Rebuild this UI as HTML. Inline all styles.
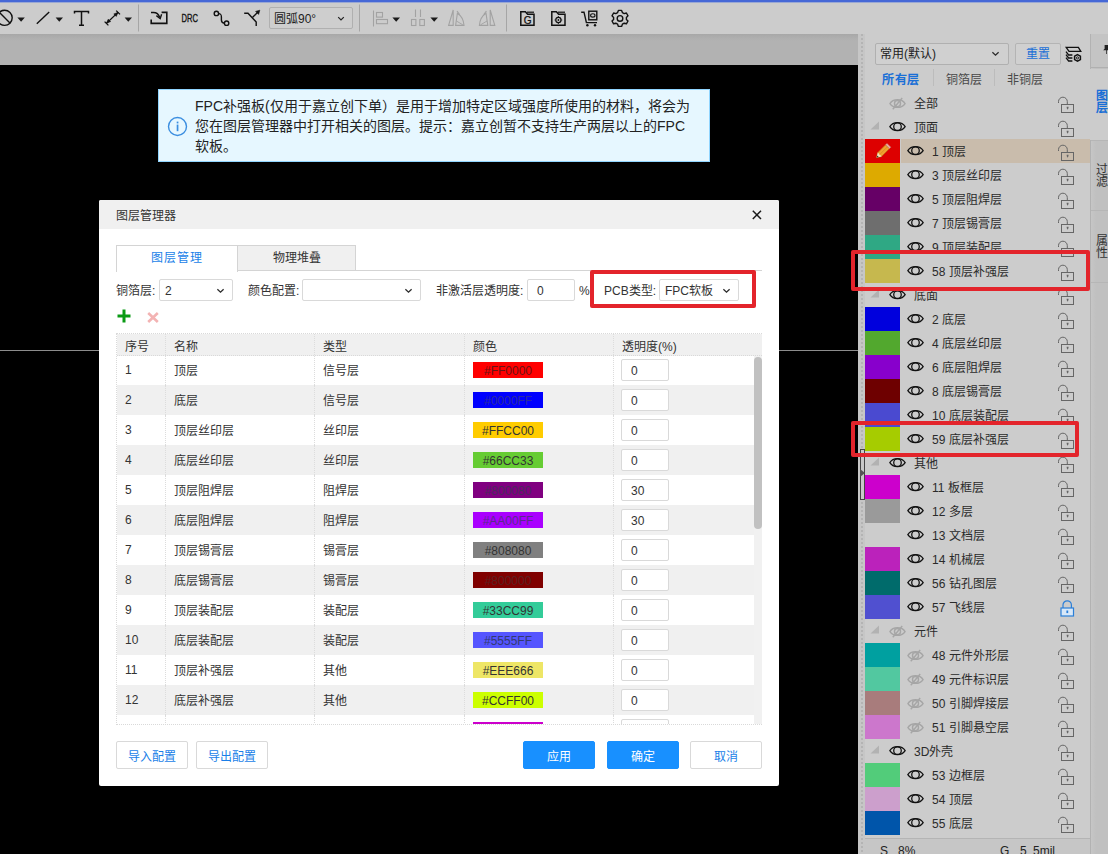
<!DOCTYPE html>
<html lang="zh-CN">
<head>
<meta charset="utf-8">
<title>图层管理器</title>
<style>
*{box-sizing:border-box;margin:0;padding:0}
html,body{width:1108px;height:854px;overflow:hidden;background:#000}
body{position:relative;font-family:"Liberation Sans",sans-serif;font-size:12px;color:#333}
.abs{position:absolute}
/* top chrome */
#bluebar{left:0;top:0;width:1108px;height:3px;background:linear-gradient(#4668d6 0 2px,#9aa8d4 2px 3px);z-index:3}
#toolbar{left:0;top:0;width:1108px;height:34px;background:#cccccc}
#band{left:0;top:34px;width:858px;height:31px;background:linear-gradient(#a8a8a8,#b0b0b0 16%,#b2b2b2 22%,#b2b2b2)}
#canvas{left:0;top:65px;width:858px;height:789px;background:#000}
.hline{height:1px;background:#8c8c8c}
.tsep{top:5px;width:1px;height:27px;background:#aaa}
.ti{position:absolute}
.dd{position:absolute;width:0;height:0;border-left:3.5px solid transparent;border-right:3.5px solid transparent;border-top:4px solid #222}
.dd.dis{border-top-color:#222}
#arcsel{left:269px;top:7px;width:84px;height:22px;border:1px solid #b0b0b0;border-radius:2px;background:#cecece;font-size:12px;line-height:23px;padding-left:4px;color:#222}
.chev{position:absolute}
/* splitter + right panel */
#split{left:858px;top:34px;width:7px;height:820px;background:#c6c6c6}
#split:after{content:"";position:absolute;left:3px;top:0;width:2px;height:820px;background-image:repeating-linear-gradient(#b4b4b4 0 2px,rgba(0,0,0,0) 2px 4px)}
#panel{left:865px;top:34px;width:225px;height:820px;background:#cccccc;overflow:hidden}
#vtabs{left:1090px;top:34px;width:18px;height:820px;background:linear-gradient(90deg,#c6c6c6,#c0c0c0 5px);border-left:1px solid #b2b2b2}
#preset{left:10px;top:9px;width:134px;height:22px;border:1px solid #b0b0b0;border-radius:2px;background:#d0d0d0;font-size:12px;line-height:20px;padding-left:4px;color:#222}
#reset{left:150px;top:9px;width:46px;height:22px;border:1px solid #b4b4b4;border-radius:2px;background:#d0d0d0;color:#1a6fd6;font-size:12px;line-height:20px;text-align:center}
.ptab{top:38px;font-size:12px;line-height:16px;color:#484848}
.psep{top:35px;width:1px;height:17px;background:#bcbcbc}
.lr{position:absolute;left:0;width:225px;height:24px}
.lr .sw{position:absolute;left:0;top:0;width:35px;height:24px}
.lr .selbg{position:absolute;left:36px;top:0;width:189px;height:24px;background:#c9bcac}
.lr .eye{position:absolute;top:6px;left:42px}
.lr.grp .eye,.lr.all .eye{left:24px}
.lr .tri{position:absolute;left:5px;top:6px}
.lr .lt{position:absolute;left:67px;top:1px;line-height:24px;font-size:12px;color:#2a2a2a;white-space:nowrap}
.lr.grp .lt,.lr.all .lt{left:49px}
.lr .lock{position:absolute;left:192px;top:5px}
.lr .pencil{position:absolute;left:9px;top:3px}
#status{left:0;top:804px;width:225px;height:16px;background:#c6c6c6;border-top:1px solid #b4b4b4;font-size:12px;line-height:24px;color:#222}
.redbox{border:4px solid #e3242b;border-radius:2px}
/* info tip */
#tip{left:158px;top:89px;width:552px;height:73px;background:#e6f7ff;border:1px solid #91d5ff;color:#222;font-size:14px;line-height:20px;padding:6px 0 0 36px;white-space:nowrap;overflow:hidden}
/* dialog */
#dlg{left:99px;top:200px;width:680px;height:586px;background:#fff;border-radius:2px}
#dlgtitle{left:0;top:0;width:680px;height:29px;background:#f0f0f0;border-radius:2px 2px 0 0;line-height:32px;padding-left:17px;font-size:12px;color:#333}
.tab{top:45px;height:26px;line-height:24px;text-align:center;font-size:12px;border:1px solid #d4d4d4}
#tabline{left:17px;top:70px;width:646px;height:1px;background:#d4d4d4}
.lbl{line-height:25px;font-size:12px;color:#333;white-space:nowrap}
.sel2{height:22px;border:1px solid #d9d9d9;border-radius:2px;background:#fff;line-height:22px;font-size:12px;padding-left:5px;color:#333}
#tbl{left:17px;top:133px;width:646px;height:392px;overflow:hidden;border:1px dotted #d9d9d9;border-right:none}
#thead{position:absolute;left:0;top:0;width:645px;height:22px;z-index:2;background:#f0f0f0;border-bottom:1px dotted #d9d9d9}
#tbody{position:absolute;left:0;top:21px;width:637px}
.tr{position:relative;height:30px;background:#fff}
.tr.alt{background:#f0f0f0}
.c{position:absolute;top:0;height:30px;line-height:31px;font-size:12px;color:#333;white-space:nowrap;border-left:1px dotted #dcdcdc;padding-left:8px}
#thead .c{height:21px;line-height:27px}
.c1{left:0;width:48px;border-left:none}
.c2{left:48px;width:149px}
.c3{left:197px;width:150px}
.tr .c2,.tr .c3{line-height:33px}
.c4{left:347px;width:149px}
.c5{left:496px;width:141px}
.chip{position:absolute;left:8px;top:7px;width:70px;height:16px;line-height:18px;text-align:center;font-size:12px}
.inp{position:absolute;left:7px;top:4px;width:48px;height:22px;border:1px solid #d9d9d9;border-radius:2px;background:#fff;line-height:22px;padding-left:9px;color:#333}
#sbar{position:absolute;left:637px;top:21px;width:8px;height:370px;background:#f1f1f1}
#sthumb{position:absolute;left:0;top:2px;width:8px;height:172px;border-radius:4px;background:#c1c1c1}
.btn{top:541px;width:72px;height:28px;line-height:30px;text-align:center;font-size:12px;border-radius:2px;border:1px solid #d9d9d9;background:#fff;color:#1a7fe8}
.btn.pri{background:#1890ff;border-color:#1890ff;color:#fff}
</style>
</head>
<body>
<div id="bluebar" class="abs"></div>
<div id="toolbar" class="abs">
<!--TB_START-->
<svg class="abs" style="left:0;top:0" width="1108" height="34" viewBox="0 0 1108 34">
<g fill="none" stroke="#111" stroke-width="1.4" stroke-linecap="butt">
  <!-- circle slash -->
  <circle cx="4.6" cy="17.8" r="7.6"/><path d="M-1 12 L10.2 23.2"/>
  <!-- line -->
  <path d="M36.8 23.8 L49.2 12"/>
  <!-- T -->
  <path d="M74.5 13.5 V11.5 H88.5 V13.5 M81.5 11.5 V25 M79 25.2 H84" stroke-width="1.5"/>
  <!-- dimension -->
  <path d="M106.5 23.2 L118 12.4" stroke-width="1.3"/>
  <path d="M104.6 21.6 L108.4 25.4 M116.2 10.6 L120 14.4" stroke-width="1.3"/>
  <path d="M106.5 23.2 L110.6 21.6 L108.2 19.2 Z M118 12.4 L113.8 14 L116.3 16.4 Z" fill="#111" stroke-width="0.6"/>
  <!-- route bracket -->
  <path d="M151.2 19.6 V23.4 H166.8 V12.4 H161.6" stroke-width="1.6"/>
  <path d="M151 12.6 H153.5 C157 12.6 158.6 14.2 159.6 17.2" stroke-width="1.5"/>
  <path d="M156.4 15.6 L160.2 18.6 L161.6 14.2" stroke-width="1.4"/>
  <!-- nodes -->
  <circle cx="216.4" cy="13.4" r="2.2"/><circle cx="226.6" cy="23.2" r="2.2"/>
  <path d="M218.6 13.6 C221.4 13.8 221.4 15 221.4 17 V20 C221.4 22.4 222 23 224.4 23.2"/>
  <!-- branch -->
  <path d="M244.2 13.2 H248 L256.2 22 V26"/>
  <path d="M252.4 17.6 L258.2 11.8"/>
  <path d="M259.8 10.2 L255.6 11.4 L258.6 14.4 Z" fill="#111" stroke-width="0.6"/>
</g>
<!-- DRC -->
<text x="181.6" y="22.2" font-family="Liberation Sans, sans-serif" font-size="11.5" fill="#111" stroke="#111" stroke-width="0.35" textLength="16.4" lengthAdjust="spacingAndGlyphs">DRC</text>
<!-- dropdown arrows -->
<g fill="#1a1a1a">
  <path d="M17.4 17.6 H24.8 L21.1 21.8 Z"/>
  <path d="M55.6 17.6 H63 L59.3 21.8 Z"/>
  <path d="M124.6 17.6 H132 L128.3 21.8 Z"/>
  <path d="M392.4 17.6 H400 L396.2 21.8 Z"/>
  <path d="M430.4 17.6 H438 L434.2 21.8 Z"/>
</g>
<!-- separators -->
<g stroke="#a6a6a6" stroke-width="1">
  <path d="M138.5 4.5 V31.5 M359.5 4.5 V31.5 M506.5 4.5 V31.5"/>
</g>
<!-- disabled icons -->
<g fill="none" stroke="#a2a2a2" stroke-width="1.1">
  <path d="M373.5 10.5 V26.5"/><rect x="376.5" y="12.5" width="6" height="4.6"/><rect x="376.5" y="19.5" width="11" height="4.2"/>
  <path d="M415.5 9.5 V17 M420.5 9.5 V17"/><rect x="411.5" y="19.5" width="4.4" height="6"/><rect x="419.8" y="19.5" width="4.6" height="6"/>
  <!-- mirror 1 -->
  <path d="M453.2 10 L448.6 25.4 H453.2 Z"/><path d="M455.6 25.4 H464 C463.6 20 461 15.5 457.4 13.2 L455.6 25.4 Z"/><path d="M457 11 L459.6 14.6"/><path d="M456.4 21 L462.8 24.8" stroke-width="0.9"/>
  <!-- mirror 2 -->
  <path d="M490.2 10 L494.8 25.4 H490.2 Z"/><path d="M487.8 25.4 H479.4 C479.8 20 482.4 15.5 486 13.2 L487.8 25.4 Z"/><path d="M486.4 11 L483.8 14.6"/><path d="M487 21 L480.6 24.8" stroke-width="0.9"/>
</g>
<!-- folder G -->
<g fill="none" stroke="#111" stroke-width="1.5">
  <path d="M520.8 25.2 V11.8 H525.4 L527.6 14.2 H534 V25.2 Z"/>
  <path d="M527 12.2 H534" stroke-width="1.2"/>
  <path d="M551.8 25.2 V11.8 H556.4 L558.6 14.2 H565 V25.2 Z"/>
  <path d="M558 12.2 H565" stroke-width="1.2"/>
  <circle cx="558.4" cy="20" r="2.6" stroke-width="1.2"/>
  <path d="M558.4 16.2 V17.2 M558.4 22.8 V23.8 M554.6 20 H555.6 M561.2 20 H562.2" stroke-width="1.2"/>
</g>
<circle cx="558.4" cy="20" r="0.9" fill="#111"/>
<text x="523.8" y="23.8" font-family="Liberation Sans, sans-serif" font-size="10" fill="#111" stroke="#111" stroke-width="0.25">G</text>
<!-- cart -->
<g fill="none" stroke="#111" stroke-width="1.4">
  <path d="M581.2 12.2 H584 L586.4 22.6 H597"/>
  <rect x="588.8" y="11.2" width="8" height="8.6"/>
  <ellipse cx="592.8" cy="15.4" rx="2.2" ry="1.7" stroke-width="1.1"/>
</g>
<circle cx="587.4" cy="25.2" r="1.2" fill="#111"/><circle cx="595" cy="25.2" r="1.2" fill="#111"/>
<!-- gear -->
<g fill="none" stroke="#111" stroke-width="1.4" stroke-linejoin="round">
  <path d="M618.4 10.4 H621.6 L622.4 12.6 L624.2 13.6 L626.4 13 L628 15.8 L626.4 17.4 V19.4 L628 21 L626.4 23.8 L624.2 23.2 L622.4 24.2 L621.6 26.4 H618.4 L617.6 24.2 L615.8 23.2 L613.6 23.8 L612 21 L613.6 19.4 V17.4 L612 15.8 L613.6 13 L615.8 13.6 L617.6 12.6 Z"/>
  <circle cx="620" cy="18.4" r="2.8"/>
</g>
</svg>
<div id="arcsel" class="abs">圆弧90°<svg class="chev" style="left:67px;top:8px" width="8" height="6" viewBox="0 0 8 6"><path d="M1.2 1.2 L4 4 L6.8 1.2" fill="none" stroke="#222" stroke-width="1.2"/></svg></div>
<!--TB_END-->
</div>
<div id="band" class="abs"></div>
<div id="canvas" class="abs"></div>
<div class="abs hline" style="left:0;top:350px;width:99px"></div>
<div class="abs hline" style="left:779px;top:350px;width:79px"></div>

<div id="tip" class="abs">
<svg class="abs" style="left:8px;top:26px" width="21" height="21" viewBox="0 0 21 21"><circle cx="10.5" cy="10.5" r="9" fill="none" stroke="#3b8ee0" stroke-width="1.4"/><rect x="9.7" y="8.6" width="1.7" height="6.6" fill="#3b8ee0"/><rect x="9.7" y="5.6" width="1.7" height="1.8" fill="#3b8ee0"/></svg>
FPC补强板(仅用于嘉立创下单）是用于增加特定区域强度所使用的材料，将会为<br>您在图层管理器中打开相关的图层。提示：嘉立创暂不支持生产两层以上的FPC<br>软板。
</div>

<div id="split" class="abs"></div>
<div id="panel" class="abs">
  <div id="preset" class="abs">常用(默认)<svg class="chev" style="left:115px;top:7px" width="9" height="6" viewBox="0 0 9 6"><path d="M1.4 1.2 L4.5 4.2 L7.6 1.2" fill="none" stroke="#2a2a2a" stroke-width="1.25"/></svg></div>
  <div id="reset" class="abs">重置</div>
  <svg class="abs" style="left:199px;top:10px" width="22" height="20" viewBox="0 0 22 20"><g fill="none" stroke="#111" stroke-width="1.3"><path d="M2.2 3.4 H14.4 L16.8 7.4 H5 Z"/><path d="M2 7.6 L4.6 11 H8.4 M2 10.6 L4.6 14 H8.4 M2 13.6 L4.6 17 H8.4"/><path d="M13.5 10.6 L16.4 12.2 V15.6 L13.5 17.2 L10.6 15.6 V12.2 Z" stroke-width="1.5"/></g><circle cx="13.5" cy="13.9" r="1.1" fill="none" stroke="#111" stroke-width="0.9"/></svg>
  <div class="abs ptab" style="left:17px;color:#1a6fd6;font-weight:bold;letter-spacing:0.6px">所有层</div>
  <div class="abs psep" style="left:68px"></div>
  <div class="abs ptab" style="left:81px">铜箔层</div>
  <div class="abs psep" style="left:129px"></div>
  <div class="abs ptab" style="left:142px">非铜层</div>
  <div class="abs" style="left:0;top:-34px;width:225px;height:854px">
<div class="lr all" style="top:91px"><svg class="eye" width="17" height="13.2" viewBox="0 0 18 14"><path d="M1 7 C4.2 1.6 13.8 1.6 17 7 C13.8 12.4 4.2 12.4 1 7 Z" fill="none" stroke="#a6a6a6" stroke-width="1.5"/><circle cx="9" cy="7" r="3.2" fill="none" stroke="#a6a6a6" stroke-width="1.5"/><path d="M4 13 L14 1" stroke="#a6a6a6" stroke-width="1.5"/></svg><span class="lt">全部</span><svg class="lock" width="18" height="17" viewBox="0 0 18 17"><path d="M1.5 7 V5.6 A4.4 4.4 0 0 1 10.3 5.6 V8.5" fill="none" stroke="#666" stroke-width="1"/><rect x="4.5" y="8.5" width="12" height="8" fill="none" stroke="#666" stroke-width="1"/><path d="M9.7 10.8 h1.8 v1.2 l-0.9 1.8 l-0.9 -1.8 Z" fill="#666"/></svg></div>
<div class="lr grp" style="top:115px"><svg class="tri" width="10" height="9" viewBox="0 0 10 9"><path d="M9 0.5 V8.5 H0.5 Z" fill="#b2b2b2"/></svg><svg class="eye" width="17" height="11.4" viewBox="0 0 18 12"><path d="M0.9 6 C4.2 0.4 13.8 0.4 17.1 6 C13.8 11.6 4.2 11.6 0.9 6 Z" fill="none" stroke="#111" stroke-width="1.35"/><circle cx="9" cy="6" r="4" fill="none" stroke="#111" stroke-width="1.35"/></svg><span class="lt">顶面</span><svg class="lock" width="18" height="17" viewBox="0 0 18 17"><path d="M1.5 7 V5.6 A4.4 4.4 0 0 1 10.3 5.6 V8.5" fill="none" stroke="#666" stroke-width="1"/><rect x="4.5" y="8.5" width="12" height="8" fill="none" stroke="#666" stroke-width="1"/><path d="M9.7 10.8 h1.8 v1.2 l-0.9 1.8 l-0.9 -1.8 Z" fill="#666"/></svg></div>
<div class="lr lay sel" style="top:139px"><span class="sw" style="background:#dd0000"><svg class="pencil" width="18" height="18" viewBox="0 0 18 18"><path d="M2.6 15.6 L3.8 10.6 L11.6 2.8 L15.4 6.6 L7.6 14.4 Z" fill="#f0a030" stroke="#b86a14" stroke-width="0.7"/><path d="M2.6 15.6 L3.8 10.6 L7.6 14.4 Z" fill="#f6e2c2"/><path d="M11.6 2.8 L13 1.4 L16.8 5.2 L15.4 6.6 Z" fill="#eeb0a8" stroke="#c08078" stroke-width="0.5"/><path d="M2.6 15.6 L3.1 13.4 L4.8 15.1 Z" fill="#333"/><path d="M5.6 12.6 L13.4 4.8" stroke="#d88a20" stroke-width="0.8"/></svg></span><span class="selbg"></span><svg class="eye" width="17" height="11.4" viewBox="0 0 18 12"><path d="M0.9 6 C4.2 0.4 13.8 0.4 17.1 6 C13.8 11.6 4.2 11.6 0.9 6 Z" fill="none" stroke="#111" stroke-width="1.35"/><circle cx="9" cy="6" r="4" fill="none" stroke="#111" stroke-width="1.35"/></svg><span class="lt">1 顶层</span><svg class="lock" width="18" height="17" viewBox="0 0 18 17"><path d="M1.5 7 V5.6 A4.4 4.4 0 0 1 10.3 5.6 V8.5" fill="none" stroke="#666" stroke-width="1"/><rect x="4.5" y="8.5" width="12" height="8" fill="none" stroke="#666" stroke-width="1"/><path d="M9.7 10.8 h1.8 v1.2 l-0.9 1.8 l-0.9 -1.8 Z" fill="#666"/></svg></div>
<div class="lr lay" style="top:163px"><span class="sw" style="background:#ddaa00"></span><svg class="eye" width="17" height="11.4" viewBox="0 0 18 12"><path d="M0.9 6 C4.2 0.4 13.8 0.4 17.1 6 C13.8 11.6 4.2 11.6 0.9 6 Z" fill="none" stroke="#111" stroke-width="1.35"/><circle cx="9" cy="6" r="4" fill="none" stroke="#111" stroke-width="1.35"/></svg><span class="lt">3 顶层丝印层</span><svg class="lock" width="18" height="17" viewBox="0 0 18 17"><path d="M1.5 7 V5.6 A4.4 4.4 0 0 1 10.3 5.6 V8.5" fill="none" stroke="#666" stroke-width="1"/><rect x="4.5" y="8.5" width="12" height="8" fill="none" stroke="#666" stroke-width="1"/><path d="M9.7 10.8 h1.8 v1.2 l-0.9 1.8 l-0.9 -1.8 Z" fill="#666"/></svg></div>
<div class="lr lay" style="top:187px"><span class="sw" style="background:#660066"></span><svg class="eye" width="17" height="11.4" viewBox="0 0 18 12"><path d="M0.9 6 C4.2 0.4 13.8 0.4 17.1 6 C13.8 11.6 4.2 11.6 0.9 6 Z" fill="none" stroke="#111" stroke-width="1.35"/><circle cx="9" cy="6" r="4" fill="none" stroke="#111" stroke-width="1.35"/></svg><span class="lt">5 顶层阻焊层</span><svg class="lock" width="18" height="17" viewBox="0 0 18 17"><path d="M1.5 7 V5.6 A4.4 4.4 0 0 1 10.3 5.6 V8.5" fill="none" stroke="#666" stroke-width="1"/><rect x="4.5" y="8.5" width="12" height="8" fill="none" stroke="#666" stroke-width="1"/><path d="M9.7 10.8 h1.8 v1.2 l-0.9 1.8 l-0.9 -1.8 Z" fill="#666"/></svg></div>
<div class="lr lay" style="top:211px"><span class="sw" style="background:#6e6e6e"></span><svg class="eye" width="17" height="11.4" viewBox="0 0 18 12"><path d="M0.9 6 C4.2 0.4 13.8 0.4 17.1 6 C13.8 11.6 4.2 11.6 0.9 6 Z" fill="none" stroke="#111" stroke-width="1.35"/><circle cx="9" cy="6" r="4" fill="none" stroke="#111" stroke-width="1.35"/></svg><span class="lt">7 顶层锡膏层</span><svg class="lock" width="18" height="17" viewBox="0 0 18 17"><path d="M1.5 7 V5.6 A4.4 4.4 0 0 1 10.3 5.6 V8.5" fill="none" stroke="#666" stroke-width="1"/><rect x="4.5" y="8.5" width="12" height="8" fill="none" stroke="#666" stroke-width="1"/><path d="M9.7 10.8 h1.8 v1.2 l-0.9 1.8 l-0.9 -1.8 Z" fill="#666"/></svg></div>
<div class="lr lay" style="top:235px"><span class="sw" style="background:#2fa884"></span><svg class="eye" width="17" height="11.4" viewBox="0 0 18 12"><path d="M0.9 6 C4.2 0.4 13.8 0.4 17.1 6 C13.8 11.6 4.2 11.6 0.9 6 Z" fill="none" stroke="#111" stroke-width="1.35"/><circle cx="9" cy="6" r="4" fill="none" stroke="#111" stroke-width="1.35"/></svg><span class="lt">9 顶层装配层</span><svg class="lock" width="18" height="17" viewBox="0 0 18 17"><path d="M1.5 7 V5.6 A4.4 4.4 0 0 1 10.3 5.6 V8.5" fill="none" stroke="#666" stroke-width="1"/><rect x="4.5" y="8.5" width="12" height="8" fill="none" stroke="#666" stroke-width="1"/><path d="M9.7 10.8 h1.8 v1.2 l-0.9 1.8 l-0.9 -1.8 Z" fill="#666"/></svg></div>
<div class="lr lay" style="top:259px"><span class="sw" style="background:#c6b84e"></span><svg class="eye" width="17" height="11.4" viewBox="0 0 18 12"><path d="M0.9 6 C4.2 0.4 13.8 0.4 17.1 6 C13.8 11.6 4.2 11.6 0.9 6 Z" fill="none" stroke="#111" stroke-width="1.35"/><circle cx="9" cy="6" r="4" fill="none" stroke="#111" stroke-width="1.35"/></svg><span class="lt">58 顶层补强层</span><svg class="lock" width="18" height="17" viewBox="0 0 18 17"><path d="M1.5 7 V5.6 A4.4 4.4 0 0 1 10.3 5.6 V8.5" fill="none" stroke="#666" stroke-width="1"/><rect x="4.5" y="8.5" width="12" height="8" fill="none" stroke="#666" stroke-width="1"/><path d="M9.7 10.8 h1.8 v1.2 l-0.9 1.8 l-0.9 -1.8 Z" fill="#666"/></svg></div>
<div class="lr grp" style="top:283px"><svg class="tri" width="10" height="9" viewBox="0 0 10 9"><path d="M9 0.5 V8.5 H0.5 Z" fill="#b2b2b2"/></svg><svg class="eye" width="17" height="11.4" viewBox="0 0 18 12"><path d="M0.9 6 C4.2 0.4 13.8 0.4 17.1 6 C13.8 11.6 4.2 11.6 0.9 6 Z" fill="none" stroke="#111" stroke-width="1.35"/><circle cx="9" cy="6" r="4" fill="none" stroke="#111" stroke-width="1.35"/></svg><span class="lt">底面</span><svg class="lock" width="18" height="17" viewBox="0 0 18 17"><path d="M1.5 7 V5.6 A4.4 4.4 0 0 1 10.3 5.6 V8.5" fill="none" stroke="#666" stroke-width="1"/><rect x="4.5" y="8.5" width="12" height="8" fill="none" stroke="#666" stroke-width="1"/><path d="M9.7 10.8 h1.8 v1.2 l-0.9 1.8 l-0.9 -1.8 Z" fill="#666"/></svg></div>
<div class="lr lay" style="top:307px"><span class="sw" style="background:#0000dd"></span><svg class="eye" width="17" height="11.4" viewBox="0 0 18 12"><path d="M0.9 6 C4.2 0.4 13.8 0.4 17.1 6 C13.8 11.6 4.2 11.6 0.9 6 Z" fill="none" stroke="#111" stroke-width="1.35"/><circle cx="9" cy="6" r="4" fill="none" stroke="#111" stroke-width="1.35"/></svg><span class="lt">2 底层</span><svg class="lock" width="18" height="17" viewBox="0 0 18 17"><path d="M1.5 7 V5.6 A4.4 4.4 0 0 1 10.3 5.6 V8.5" fill="none" stroke="#666" stroke-width="1"/><rect x="4.5" y="8.5" width="12" height="8" fill="none" stroke="#666" stroke-width="1"/><path d="M9.7 10.8 h1.8 v1.2 l-0.9 1.8 l-0.9 -1.8 Z" fill="#666"/></svg></div>
<div class="lr lay" style="top:331px"><span class="sw" style="background:#52a82e"></span><svg class="eye" width="17" height="11.4" viewBox="0 0 18 12"><path d="M0.9 6 C4.2 0.4 13.8 0.4 17.1 6 C13.8 11.6 4.2 11.6 0.9 6 Z" fill="none" stroke="#111" stroke-width="1.35"/><circle cx="9" cy="6" r="4" fill="none" stroke="#111" stroke-width="1.35"/></svg><span class="lt">4 底层丝印层</span><svg class="lock" width="18" height="17" viewBox="0 0 18 17"><path d="M1.5 7 V5.6 A4.4 4.4 0 0 1 10.3 5.6 V8.5" fill="none" stroke="#666" stroke-width="1"/><rect x="4.5" y="8.5" width="12" height="8" fill="none" stroke="#666" stroke-width="1"/><path d="M9.7 10.8 h1.8 v1.2 l-0.9 1.8 l-0.9 -1.8 Z" fill="#666"/></svg></div>
<div class="lr lay" style="top:355px"><span class="sw" style="background:#8800cc"></span><svg class="eye" width="17" height="11.4" viewBox="0 0 18 12"><path d="M0.9 6 C4.2 0.4 13.8 0.4 17.1 6 C13.8 11.6 4.2 11.6 0.9 6 Z" fill="none" stroke="#111" stroke-width="1.35"/><circle cx="9" cy="6" r="4" fill="none" stroke="#111" stroke-width="1.35"/></svg><span class="lt">6 底层阻焊层</span><svg class="lock" width="18" height="17" viewBox="0 0 18 17"><path d="M1.5 7 V5.6 A4.4 4.4 0 0 1 10.3 5.6 V8.5" fill="none" stroke="#666" stroke-width="1"/><rect x="4.5" y="8.5" width="12" height="8" fill="none" stroke="#666" stroke-width="1"/><path d="M9.7 10.8 h1.8 v1.2 l-0.9 1.8 l-0.9 -1.8 Z" fill="#666"/></svg></div>
<div class="lr lay" style="top:379px"><span class="sw" style="background:#6e0000"></span><svg class="eye" width="17" height="11.4" viewBox="0 0 18 12"><path d="M0.9 6 C4.2 0.4 13.8 0.4 17.1 6 C13.8 11.6 4.2 11.6 0.9 6 Z" fill="none" stroke="#111" stroke-width="1.35"/><circle cx="9" cy="6" r="4" fill="none" stroke="#111" stroke-width="1.35"/></svg><span class="lt">8 底层锡膏层</span><svg class="lock" width="18" height="17" viewBox="0 0 18 17"><path d="M1.5 7 V5.6 A4.4 4.4 0 0 1 10.3 5.6 V8.5" fill="none" stroke="#666" stroke-width="1"/><rect x="4.5" y="8.5" width="12" height="8" fill="none" stroke="#666" stroke-width="1"/><path d="M9.7 10.8 h1.8 v1.2 l-0.9 1.8 l-0.9 -1.8 Z" fill="#666"/></svg></div>
<div class="lr lay" style="top:403px"><span class="sw" style="background:#4a4ad0"></span><svg class="eye" width="17" height="11.4" viewBox="0 0 18 12"><path d="M0.9 6 C4.2 0.4 13.8 0.4 17.1 6 C13.8 11.6 4.2 11.6 0.9 6 Z" fill="none" stroke="#111" stroke-width="1.35"/><circle cx="9" cy="6" r="4" fill="none" stroke="#111" stroke-width="1.35"/></svg><span class="lt">10 底层装配层</span><svg class="lock" width="18" height="17" viewBox="0 0 18 17"><path d="M1.5 7 V5.6 A4.4 4.4 0 0 1 10.3 5.6 V8.5" fill="none" stroke="#666" stroke-width="1"/><rect x="4.5" y="8.5" width="12" height="8" fill="none" stroke="#666" stroke-width="1"/><path d="M9.7 10.8 h1.8 v1.2 l-0.9 1.8 l-0.9 -1.8 Z" fill="#666"/></svg></div>
<div class="lr lay" style="top:427px"><span class="sw" style="background:#a6cc00"></span><svg class="eye" width="17" height="11.4" viewBox="0 0 18 12"><path d="M0.9 6 C4.2 0.4 13.8 0.4 17.1 6 C13.8 11.6 4.2 11.6 0.9 6 Z" fill="none" stroke="#111" stroke-width="1.35"/><circle cx="9" cy="6" r="4" fill="none" stroke="#111" stroke-width="1.35"/></svg><span class="lt">59 底层补强层</span><svg class="lock" width="18" height="17" viewBox="0 0 18 17"><path d="M1.5 7 V5.6 A4.4 4.4 0 0 1 10.3 5.6 V8.5" fill="none" stroke="#666" stroke-width="1"/><rect x="4.5" y="8.5" width="12" height="8" fill="none" stroke="#666" stroke-width="1"/><path d="M9.7 10.8 h1.8 v1.2 l-0.9 1.8 l-0.9 -1.8 Z" fill="#666"/></svg></div>
<div class="lr grp" style="top:451px"><svg class="tri" width="10" height="9" viewBox="0 0 10 9"><path d="M9 0.5 V8.5 H0.5 Z" fill="#b2b2b2"/></svg><svg class="eye" width="17" height="11.4" viewBox="0 0 18 12"><path d="M0.9 6 C4.2 0.4 13.8 0.4 17.1 6 C13.8 11.6 4.2 11.6 0.9 6 Z" fill="none" stroke="#111" stroke-width="1.35"/><circle cx="9" cy="6" r="4" fill="none" stroke="#111" stroke-width="1.35"/></svg><span class="lt">其他</span><svg class="lock" width="18" height="17" viewBox="0 0 18 17"><path d="M1.5 7 V5.6 A4.4 4.4 0 0 1 10.3 5.6 V8.5" fill="none" stroke="#666" stroke-width="1"/><rect x="4.5" y="8.5" width="12" height="8" fill="none" stroke="#666" stroke-width="1"/><path d="M9.7 10.8 h1.8 v1.2 l-0.9 1.8 l-0.9 -1.8 Z" fill="#666"/></svg></div>
<div class="lr lay" style="top:475px"><span class="sw" style="background:#cc00cc"></span><svg class="eye" width="17" height="11.4" viewBox="0 0 18 12"><path d="M0.9 6 C4.2 0.4 13.8 0.4 17.1 6 C13.8 11.6 4.2 11.6 0.9 6 Z" fill="none" stroke="#111" stroke-width="1.35"/><circle cx="9" cy="6" r="4" fill="none" stroke="#111" stroke-width="1.35"/></svg><span class="lt">11 板框层</span><svg class="lock" width="18" height="17" viewBox="0 0 18 17"><path d="M1.5 7 V5.6 A4.4 4.4 0 0 1 10.3 5.6 V8.5" fill="none" stroke="#666" stroke-width="1"/><rect x="4.5" y="8.5" width="12" height="8" fill="none" stroke="#666" stroke-width="1"/><path d="M9.7 10.8 h1.8 v1.2 l-0.9 1.8 l-0.9 -1.8 Z" fill="#666"/></svg></div>
<div class="lr lay" style="top:499px"><span class="sw" style="background:#9a9a9a"></span><svg class="eye" width="17" height="11.4" viewBox="0 0 18 12"><path d="M0.9 6 C4.2 0.4 13.8 0.4 17.1 6 C13.8 11.6 4.2 11.6 0.9 6 Z" fill="none" stroke="#111" stroke-width="1.35"/><circle cx="9" cy="6" r="4" fill="none" stroke="#111" stroke-width="1.35"/></svg><span class="lt">12 多层</span><svg class="lock" width="18" height="17" viewBox="0 0 18 17"><path d="M1.5 7 V5.6 A4.4 4.4 0 0 1 10.3 5.6 V8.5" fill="none" stroke="#666" stroke-width="1"/><rect x="4.5" y="8.5" width="12" height="8" fill="none" stroke="#666" stroke-width="1"/><path d="M9.7 10.8 h1.8 v1.2 l-0.9 1.8 l-0.9 -1.8 Z" fill="#666"/></svg></div>
<div class="lr lay" style="top:523px"><svg class="eye" width="17" height="11.4" viewBox="0 0 18 12"><path d="M0.9 6 C4.2 0.4 13.8 0.4 17.1 6 C13.8 11.6 4.2 11.6 0.9 6 Z" fill="none" stroke="#111" stroke-width="1.35"/><circle cx="9" cy="6" r="4" fill="none" stroke="#111" stroke-width="1.35"/></svg><span class="lt">13 文档层</span><svg class="lock" width="18" height="17" viewBox="0 0 18 17"><path d="M1.5 7 V5.6 A4.4 4.4 0 0 1 10.3 5.6 V8.5" fill="none" stroke="#666" stroke-width="1"/><rect x="4.5" y="8.5" width="12" height="8" fill="none" stroke="#666" stroke-width="1"/><path d="M9.7 10.8 h1.8 v1.2 l-0.9 1.8 l-0.9 -1.8 Z" fill="#666"/></svg></div>
<div class="lr lay" style="top:547px"><span class="sw" style="background:#bb22bb"></span><svg class="eye" width="17" height="11.4" viewBox="0 0 18 12"><path d="M0.9 6 C4.2 0.4 13.8 0.4 17.1 6 C13.8 11.6 4.2 11.6 0.9 6 Z" fill="none" stroke="#111" stroke-width="1.35"/><circle cx="9" cy="6" r="4" fill="none" stroke="#111" stroke-width="1.35"/></svg><span class="lt">14 机械层</span><svg class="lock" width="18" height="17" viewBox="0 0 18 17"><path d="M1.5 7 V5.6 A4.4 4.4 0 0 1 10.3 5.6 V8.5" fill="none" stroke="#666" stroke-width="1"/><rect x="4.5" y="8.5" width="12" height="8" fill="none" stroke="#666" stroke-width="1"/><path d="M9.7 10.8 h1.8 v1.2 l-0.9 1.8 l-0.9 -1.8 Z" fill="#666"/></svg></div>
<div class="lr lay" style="top:571px"><span class="sw" style="background:#006b6b"></span><svg class="eye" width="17" height="11.4" viewBox="0 0 18 12"><path d="M0.9 6 C4.2 0.4 13.8 0.4 17.1 6 C13.8 11.6 4.2 11.6 0.9 6 Z" fill="none" stroke="#111" stroke-width="1.35"/><circle cx="9" cy="6" r="4" fill="none" stroke="#111" stroke-width="1.35"/></svg><span class="lt">56 钻孔图层</span><svg class="lock" width="18" height="17" viewBox="0 0 18 17"><path d="M1.5 7 V5.6 A4.4 4.4 0 0 1 10.3 5.6 V8.5" fill="none" stroke="#666" stroke-width="1"/><rect x="4.5" y="8.5" width="12" height="8" fill="none" stroke="#666" stroke-width="1"/><path d="M9.7 10.8 h1.8 v1.2 l-0.9 1.8 l-0.9 -1.8 Z" fill="#666"/></svg></div>
<div class="lr lay" style="top:595px"><span class="sw" style="background:#5050d0"></span><svg class="eye" width="17" height="11.4" viewBox="0 0 18 12"><path d="M0.9 6 C4.2 0.4 13.8 0.4 17.1 6 C13.8 11.6 4.2 11.6 0.9 6 Z" fill="none" stroke="#111" stroke-width="1.35"/><circle cx="9" cy="6" r="4" fill="none" stroke="#111" stroke-width="1.35"/></svg><span class="lt">57 飞线层</span><svg class="lock" width="18" height="17" viewBox="0 0 18 17"><path d="M6 8 V5 A4.2 4.2 0 0 1 14.4 5 V8" fill="none" stroke="#2b7fd8" stroke-width="1.2"/><rect x="4" y="8" width="12.5" height="8" fill="#d8e8f8" stroke="#2b7fd8" stroke-width="1.2"/><rect x="9.4" y="10.5" width="1.8" height="2.6" fill="#2b7fd8"/></svg></div>
<div class="lr grp" style="top:619px"><svg class="tri" width="10" height="9" viewBox="0 0 10 9"><path d="M9 0.5 V8.5 H0.5 Z" fill="#b2b2b2"/></svg><svg class="eye" width="17" height="13.2" viewBox="0 0 18 14"><path d="M1 7 C4.2 1.6 13.8 1.6 17 7 C13.8 12.4 4.2 12.4 1 7 Z" fill="none" stroke="#a6a6a6" stroke-width="1.5"/><circle cx="9" cy="7" r="3.2" fill="none" stroke="#a6a6a6" stroke-width="1.5"/><path d="M4 13 L14 1" stroke="#a6a6a6" stroke-width="1.5"/></svg><span class="lt">元件</span><svg class="lock" width="18" height="17" viewBox="0 0 18 17"><path d="M1.5 7 V5.6 A4.4 4.4 0 0 1 10.3 5.6 V8.5" fill="none" stroke="#666" stroke-width="1"/><rect x="4.5" y="8.5" width="12" height="8" fill="none" stroke="#666" stroke-width="1"/><path d="M9.7 10.8 h1.8 v1.2 l-0.9 1.8 l-0.9 -1.8 Z" fill="#666"/></svg></div>
<div class="lr lay" style="top:643px"><span class="sw" style="background:#00a0a0"></span><svg class="eye" width="17" height="13.2" viewBox="0 0 18 14"><path d="M1 7 C4.2 1.6 13.8 1.6 17 7 C13.8 12.4 4.2 12.4 1 7 Z" fill="none" stroke="#a6a6a6" stroke-width="1.5"/><circle cx="9" cy="7" r="3.2" fill="none" stroke="#a6a6a6" stroke-width="1.5"/><path d="M4 13 L14 1" stroke="#a6a6a6" stroke-width="1.5"/></svg><span class="lt">48 元件外形层</span><svg class="lock" width="18" height="17" viewBox="0 0 18 17"><path d="M1.5 7 V5.6 A4.4 4.4 0 0 1 10.3 5.6 V8.5" fill="none" stroke="#666" stroke-width="1"/><rect x="4.5" y="8.5" width="12" height="8" fill="none" stroke="#666" stroke-width="1"/><path d="M9.7 10.8 h1.8 v1.2 l-0.9 1.8 l-0.9 -1.8 Z" fill="#666"/></svg></div>
<div class="lr lay" style="top:667px"><span class="sw" style="background:#52c8a0"></span><svg class="eye" width="17" height="13.2" viewBox="0 0 18 14"><path d="M1 7 C4.2 1.6 13.8 1.6 17 7 C13.8 12.4 4.2 12.4 1 7 Z" fill="none" stroke="#a6a6a6" stroke-width="1.5"/><circle cx="9" cy="7" r="3.2" fill="none" stroke="#a6a6a6" stroke-width="1.5"/><path d="M4 13 L14 1" stroke="#a6a6a6" stroke-width="1.5"/></svg><span class="lt">49 元件标识层</span><svg class="lock" width="18" height="17" viewBox="0 0 18 17"><path d="M1.5 7 V5.6 A4.4 4.4 0 0 1 10.3 5.6 V8.5" fill="none" stroke="#666" stroke-width="1"/><rect x="4.5" y="8.5" width="12" height="8" fill="none" stroke="#666" stroke-width="1"/><path d="M9.7 10.8 h1.8 v1.2 l-0.9 1.8 l-0.9 -1.8 Z" fill="#666"/></svg></div>
<div class="lr lay" style="top:691px"><span class="sw" style="background:#a87c7c"></span><svg class="eye" width="17" height="13.2" viewBox="0 0 18 14"><path d="M1 7 C4.2 1.6 13.8 1.6 17 7 C13.8 12.4 4.2 12.4 1 7 Z" fill="none" stroke="#a6a6a6" stroke-width="1.5"/><circle cx="9" cy="7" r="3.2" fill="none" stroke="#a6a6a6" stroke-width="1.5"/><path d="M4 13 L14 1" stroke="#a6a6a6" stroke-width="1.5"/></svg><span class="lt">50 引脚焊接层</span><svg class="lock" width="18" height="17" viewBox="0 0 18 17"><path d="M1.5 7 V5.6 A4.4 4.4 0 0 1 10.3 5.6 V8.5" fill="none" stroke="#666" stroke-width="1"/><rect x="4.5" y="8.5" width="12" height="8" fill="none" stroke="#666" stroke-width="1"/><path d="M9.7 10.8 h1.8 v1.2 l-0.9 1.8 l-0.9 -1.8 Z" fill="#666"/></svg></div>
<div class="lr lay" style="top:715px"><span class="sw" style="background:#cc77cc"></span><svg class="eye" width="17" height="13.2" viewBox="0 0 18 14"><path d="M1 7 C4.2 1.6 13.8 1.6 17 7 C13.8 12.4 4.2 12.4 1 7 Z" fill="none" stroke="#a6a6a6" stroke-width="1.5"/><circle cx="9" cy="7" r="3.2" fill="none" stroke="#a6a6a6" stroke-width="1.5"/><path d="M4 13 L14 1" stroke="#a6a6a6" stroke-width="1.5"/></svg><span class="lt">51 引脚悬空层</span><svg class="lock" width="18" height="17" viewBox="0 0 18 17"><path d="M1.5 7 V5.6 A4.4 4.4 0 0 1 10.3 5.6 V8.5" fill="none" stroke="#666" stroke-width="1"/><rect x="4.5" y="8.5" width="12" height="8" fill="none" stroke="#666" stroke-width="1"/><path d="M9.7 10.8 h1.8 v1.2 l-0.9 1.8 l-0.9 -1.8 Z" fill="#666"/></svg></div>
<div class="lr grp" style="top:739px"><svg class="tri" width="10" height="9" viewBox="0 0 10 9"><path d="M9 0.5 V8.5 H0.5 Z" fill="#b2b2b2"/></svg><svg class="eye" width="17" height="11.4" viewBox="0 0 18 12"><path d="M0.9 6 C4.2 0.4 13.8 0.4 17.1 6 C13.8 11.6 4.2 11.6 0.9 6 Z" fill="none" stroke="#111" stroke-width="1.35"/><circle cx="9" cy="6" r="4" fill="none" stroke="#111" stroke-width="1.35"/></svg><span class="lt">3D外壳</span><svg class="lock" width="18" height="17" viewBox="0 0 18 17"><path d="M1.5 7 V5.6 A4.4 4.4 0 0 1 10.3 5.6 V8.5" fill="none" stroke="#666" stroke-width="1"/><rect x="4.5" y="8.5" width="12" height="8" fill="none" stroke="#666" stroke-width="1"/><path d="M9.7 10.8 h1.8 v1.2 l-0.9 1.8 l-0.9 -1.8 Z" fill="#666"/></svg></div>
<div class="lr lay" style="top:763px"><span class="sw" style="background:#52cc7a"></span><svg class="eye" width="17" height="11.4" viewBox="0 0 18 12"><path d="M0.9 6 C4.2 0.4 13.8 0.4 17.1 6 C13.8 11.6 4.2 11.6 0.9 6 Z" fill="none" stroke="#111" stroke-width="1.35"/><circle cx="9" cy="6" r="4" fill="none" stroke="#111" stroke-width="1.35"/></svg><span class="lt">53 边框层</span><svg class="lock" width="18" height="17" viewBox="0 0 18 17"><path d="M1.5 7 V5.6 A4.4 4.4 0 0 1 10.3 5.6 V8.5" fill="none" stroke="#666" stroke-width="1"/><rect x="4.5" y="8.5" width="12" height="8" fill="none" stroke="#666" stroke-width="1"/><path d="M9.7 10.8 h1.8 v1.2 l-0.9 1.8 l-0.9 -1.8 Z" fill="#666"/></svg></div>
<div class="lr lay" style="top:787px"><span class="sw" style="background:#cc9fcc"></span><svg class="eye" width="17" height="11.4" viewBox="0 0 18 12"><path d="M0.9 6 C4.2 0.4 13.8 0.4 17.1 6 C13.8 11.6 4.2 11.6 0.9 6 Z" fill="none" stroke="#111" stroke-width="1.35"/><circle cx="9" cy="6" r="4" fill="none" stroke="#111" stroke-width="1.35"/></svg><span class="lt">54 顶层</span><svg class="lock" width="18" height="17" viewBox="0 0 18 17"><path d="M1.5 7 V5.6 A4.4 4.4 0 0 1 10.3 5.6 V8.5" fill="none" stroke="#666" stroke-width="1"/><rect x="4.5" y="8.5" width="12" height="8" fill="none" stroke="#666" stroke-width="1"/><path d="M9.7 10.8 h1.8 v1.2 l-0.9 1.8 l-0.9 -1.8 Z" fill="#666"/></svg></div>
<div class="lr lay" style="top:811px"><span class="sw" style="background:#0055aa"></span><svg class="eye" width="17" height="11.4" viewBox="0 0 18 12"><path d="M0.9 6 C4.2 0.4 13.8 0.4 17.1 6 C13.8 11.6 4.2 11.6 0.9 6 Z" fill="none" stroke="#111" stroke-width="1.35"/><circle cx="9" cy="6" r="4" fill="none" stroke="#111" stroke-width="1.35"/></svg><span class="lt">55 底层</span><svg class="lock" width="18" height="17" viewBox="0 0 18 17"><path d="M1.5 7 V5.6 A4.4 4.4 0 0 1 10.3 5.6 V8.5" fill="none" stroke="#666" stroke-width="1"/><rect x="4.5" y="8.5" width="12" height="8" fill="none" stroke="#666" stroke-width="1"/><path d="M9.7 10.8 h1.8 v1.2 l-0.9 1.8 l-0.9 -1.8 Z" fill="#666"/></svg></div>
  </div>
  <div id="status" class="abs"><span class="abs" style="left:15px">S</span><span class="abs" style="left:33px">8%</span><span class="abs" style="left:135px">G</span><span class="abs" style="left:155px">5</span><span class="abs" style="left:168px">5mil</span></div>
</div>
<div id="vtabs" class="abs">
  <div class="abs" style="left:0;top:0;width:17px;height:34px;background:#c4c4c4;border-bottom:1px solid #b0b0b0"></div>
  <svg class="abs" style="left:12px;top:11px" width="7" height="9" viewBox="0 0 9 12"><path d="M2 0 H7 V5 L9 7 H0 L2 5 Z M4 7 H5 V12 H4 Z" fill="#222"/></svg>
  <div class="abs" style="left:-1px;top:35px;width:18px;height:71px;background:#cccccc"></div>
  <div class="abs" style="left:5px;top:56px;width:14px;white-space:nowrap;line-height:12px;font-size:12px;color:#1a6fd6;font-weight:bold">图<br>层</div>
  <div class="abs" style="left:0;top:106px;width:17px;height:71px;border-top:1px solid #b6b6b6;border-bottom:1px solid #b6b6b6"></div>
  <div class="abs" style="left:5px;top:130px;width:14px;white-space:nowrap;line-height:12px;font-size:12px;color:#333">过<br>滤</div>
  <div class="abs" style="left:0;top:177px;width:17px;height:72px;border-bottom:1px solid #b6b6b6"></div>
  <div class="abs" style="left:5px;top:201px;width:14px;white-space:nowrap;line-height:12px;font-size:12px;color:#333">属<br>性</div>
</div>
<!-- splitter handle -->
<div class="abs" style="left:860px;top:449px;width:5px;height:51px;border:1px solid #444;background:#c8c8c8"></div>
<svg class="abs" style="left:860px;top:469px" width="5" height="8" viewBox="0 0 5 8"><path d="M0 0 L5 4 L0 8 Z" fill="#555"/></svg>

<!-- dialog -->
<div id="dlg" class="abs">
  <div id="dlgtitle" class="abs">图层管理器</div>
  <svg class="abs" style="left:653px;top:10px" width="10" height="10" viewBox="0 0 10 10"><path d="M0.8 0.8 L9 9 M9 0.8 L0.8 9" stroke="#1a1a1a" stroke-width="1.5" fill="none"/></svg>
  <div class="abs tab" style="left:17px;width:122px;height:27px;background:#fff;color:#1a7fe8;border-bottom:none;z-index:2;letter-spacing:1px">图层管理</div>
  <div class="abs tab" style="left:138px;width:119px;background:#f0f0f0;color:#333">物理堆叠</div>
  <div id="tabline" class="abs"></div>

  <div class="abs lbl" style="left:17px;top:79px">铜箔层:</div>
  <div class="abs sel2" style="left:60px;top:79px;width:74px">2<svg class="chev" style="left:56px;top:8px" width="9" height="6" viewBox="0 0 9 6"><path d="M1.4 1.2 L4.5 4.2 L7.6 1.2" fill="none" stroke="#2a2a2a" stroke-width="1.25"/></svg></div>
  <div class="abs lbl" style="left:149px;top:79px">颜色配置:</div>
  <div class="abs sel2" style="left:203px;top:79px;width:119px"><svg class="chev" style="left:101px;top:8px" width="9" height="6" viewBox="0 0 9 6"><path d="M1.4 1.2 L4.5 4.2 L7.6 1.2" fill="none" stroke="#2a2a2a" stroke-width="1.25"/></svg></div>
  <div class="abs lbl" style="left:337px;top:79px">非激活层透明度:</div>
  <div class="abs sel2" style="left:428px;top:79px;width:48px;padding-left:9px">0</div>
  <div class="abs lbl" style="left:480px;top:79px">%</div>
  <div class="abs lbl" style="left:505px;top:79px">PCB类型:</div>
  <div class="abs sel2" style="left:560px;top:79px;width:80px">FPC软板<svg class="chev" style="left:62px;top:8px" width="9" height="6" viewBox="0 0 9 6"><path d="M1.4 1.2 L4.5 4.2 L7.6 1.2" fill="none" stroke="#2a2a2a" stroke-width="1.25"/></svg></div>
  <div class="abs redbox" style="left:491px;top:70px;width:166px;height:38px"></div>

  <svg class="abs" style="left:18px;top:109px" width="14" height="14" viewBox="0 0 14 14"><path d="M7 0.5 V13.5 M0.5 7 H13.5" stroke="#0a9a14" stroke-width="3" fill="none"/></svg>
  <svg class="abs" style="left:48px;top:112px" width="12" height="11" viewBox="0 0 12 11"><path d="M1.2 1 L10.8 10 M10.8 1 L1.2 10" stroke="#f3b3b3" stroke-width="2.6" fill="none"/></svg>

  <div id="tbl" class="abs">
    <div id="thead"><span class="c c1">序号</span><span class="c c2">名称</span><span class="c c3">类型</span><span class="c c4">颜色</span><span class="c c5">透明度(%)</span></div>
    <div id="tbody">
<div class="tr"><span class="c c1">1</span><span class="c c2">顶层</span><span class="c c3">信号层</span><span class="c c4"><span class="chip" style="background:#FF0000;color:#6a1414">#FF0000</span></span><span class="c c5"><span class="inp">0</span></span></div>
<div class="tr alt"><span class="c c1">2</span><span class="c c2">底层</span><span class="c c3">信号层</span><span class="c c4"><span class="chip" style="background:#0000FF;color:#2a2aa0">#0000FF</span></span><span class="c c5"><span class="inp">0</span></span></div>
<div class="tr"><span class="c c1">3</span><span class="c c2">顶层丝印层</span><span class="c c3">丝印层</span><span class="c c4"><span class="chip" style="background:#FFCC00;color:#333">#FFCC00</span></span><span class="c c5"><span class="inp">0</span></span></div>
<div class="tr alt"><span class="c c1">4</span><span class="c c2">底层丝印层</span><span class="c c3">丝印层</span><span class="c c4"><span class="chip" style="background:#66CC33;color:#333">#66CC33</span></span><span class="c c5"><span class="inp">0</span></span></div>
<div class="tr"><span class="c c1">5</span><span class="c c2">顶层阻焊层</span><span class="c c3">阻焊层</span><span class="c c4"><span class="chip" style="background:#800080;color:#4a2a5a">#800080</span></span><span class="c c5"><span class="inp">30</span></span></div>
<div class="tr alt"><span class="c c1">6</span><span class="c c2">底层阻焊层</span><span class="c c3">阻焊层</span><span class="c c4"><span class="chip" style="background:#AA00FF;color:#5a2a8a">#AA00FF</span></span><span class="c c5"><span class="inp">30</span></span></div>
<div class="tr"><span class="c c1">7</span><span class="c c2">顶层锡膏层</span><span class="c c3">锡膏层</span><span class="c c4"><span class="chip" style="background:#808080;color:#333">#808080</span></span><span class="c c5"><span class="inp">0</span></span></div>
<div class="tr alt"><span class="c c1">8</span><span class="c c2">底层锡膏层</span><span class="c c3">锡膏层</span><span class="c c4"><span class="chip" style="background:#800000;color:#5a2020">#800000</span></span><span class="c c5"><span class="inp">0</span></span></div>
<div class="tr"><span class="c c1">9</span><span class="c c2">顶层装配层</span><span class="c c3">装配层</span><span class="c c4"><span class="chip" style="background:#33CC99;color:#333">#33CC99</span></span><span class="c c5"><span class="inp">0</span></span></div>
<div class="tr alt"><span class="c c1">10</span><span class="c c2">底层装配层</span><span class="c c3">装配层</span><span class="c c4"><span class="chip" style="background:#5555FF;color:#333a70">#5555FF</span></span><span class="c c5"><span class="inp">0</span></span></div>
<div class="tr"><span class="c c1">11</span><span class="c c2">顶层补强层</span><span class="c c3">其他</span><span class="c c4"><span class="chip" style="background:#EEE666;color:#333">#EEE666</span></span><span class="c c5"><span class="inp">0</span></span></div>
<div class="tr alt"><span class="c c1">12</span><span class="c c2">底层补强层</span><span class="c c3">其他</span><span class="c c4"><span class="chip" style="background:#CCFF00;color:#333">#CCFF00</span></span><span class="c c5"><span class="inp">0</span></span></div>
<div class="tr"><span class="c c1">13</span><span class="c c2"></span><span class="c c3"></span><span class="c c4"><span class="chip" style="background:#CC00CC;color:#333">#CC00CC</span></span><span class="c c5"><span class="inp"></span></span></div>
    </div>
    <div id="sbar"><div id="sthumb"></div></div>
  </div>

  <div class="abs btn" style="left:17px">导入配置</div>
  <div class="abs btn" style="left:97px">导出配置</div>
  <div class="abs btn pri" style="left:424px">应用</div>
  <div class="abs btn pri" style="left:508px">确定</div>
  <div class="abs btn" style="left:591px">取消</div>
</div>

<!-- red annotation boxes on panel -->
<div class="abs redbox" style="left:851px;top:250px;width:239px;height:41px"></div>
<div class="abs redbox" style="left:851px;top:421px;width:228px;height:36px"></div>
</body>
</html>
